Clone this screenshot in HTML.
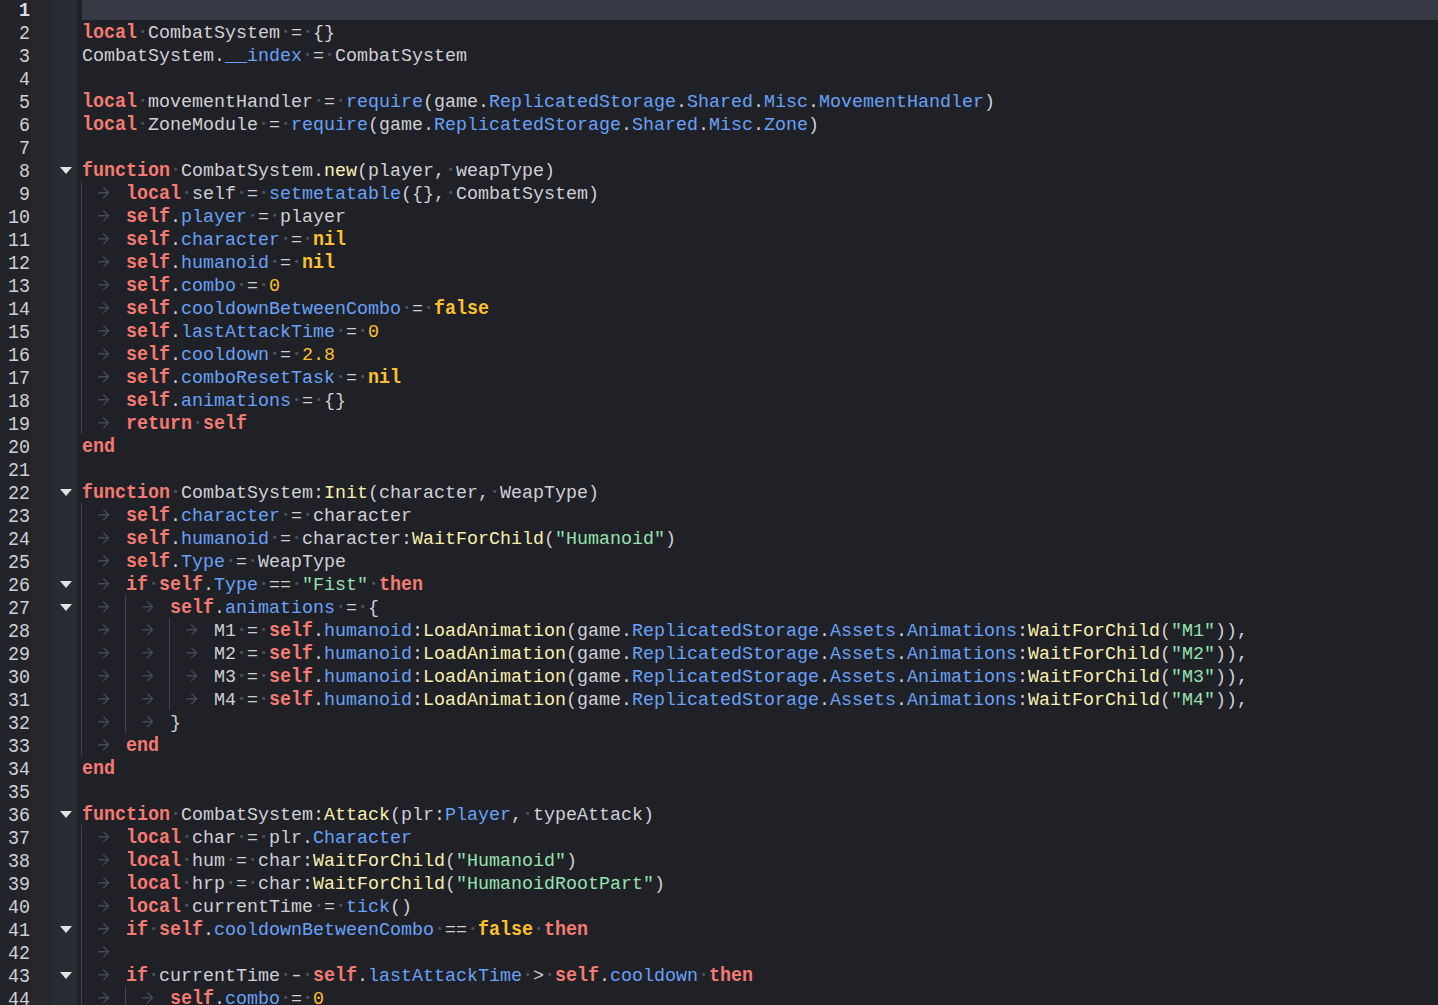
<!DOCTYPE html>
<html><head><meta charset="utf-8"><style>
*{margin:0;padding:0;box-sizing:border-box}
html,body{width:1438px;height:1005px;overflow:hidden;background:#202126}
body{position:relative;font-family:"Liberation Mono",monospace;font-size:18.33px;line-height:23px}
.g1{position:absolute;left:0;top:0;width:31px;height:1005px;background:#222429}
.g2{position:absolute;left:31px;top:0;width:22.5px;height:1005px;background:#26282e}
.g3{position:absolute;left:53.5px;top:0;width:23.5px;height:1005px;background:#292b32}
.curl{position:absolute;left:82px;top:-3px;right:0;height:23px;background:#373a44}
.ln{position:absolute;left:0;width:30px;text-align:right;color:#d0d0d4;height:23px;transform-origin:0 16px;transform:scaleY(1.08)}
.ln.cur{color:#dddde6;font-weight:bold}
.cl{position:absolute;left:82px;white-space:pre;height:23px;color:#d0d0d6;transform-origin:0 16px;transform:scaleY(1.03)}
.kw{color:#f47b72;font-weight:bold;display:inline-block;transform-origin:0 16px;transform:scaleY(1.05)}
.bool{color:#fcc02e;font-weight:bold;display:inline-block;transform-origin:0 16px;transform:scaleY(1.05)}
.num{color:#fcc02e}
.str{color:#95e3b0}
.fn{color:#f9f0b0}
.mem{color:#68a2f8}
.blt{color:#68a2f8}
.id,.op{color:#d0d0d6}
.dash{display:inline-block;transform:scaleX(1.4)}
.fold{position:absolute;left:59.5px;width:0;height:0;border-left:6px solid transparent;border-right:6px solid transparent;border-top:7px solid #e2e2e2}
.gd{position:absolute;width:1px;background:#42454e}
svg{position:absolute;left:0;top:0}
</style></head><body>
<div class="g1"></div><div class="g2"></div><div class="g3"></div>
<div class="curl"></div>
<div class="gd" style="left:81px;top:181px;height:253px"></div>
<div class="gd" style="left:81px;top:503px;height:253px"></div>
<div class="gd" style="left:125px;top:595px;height:138px"></div>
<div class="gd" style="left:169px;top:618px;height:92px"></div>
<div class="gd" style="left:81px;top:825px;height:184px"></div>
<div class="gd" style="left:125px;top:986px;height:23px"></div>
<svg width="1438" height="1005"><g fill="#4d505b"><circle cx="142.7" cy="31.4" r="1.60"/><circle cx="285.7" cy="31.4" r="1.60"/><circle cx="307.7" cy="31.4" r="1.60"/><circle cx="307.7" cy="54.4" r="1.60"/><circle cx="329.7" cy="54.4" r="1.60"/><circle cx="142.7" cy="100.3" r="1.60"/><circle cx="318.7" cy="100.3" r="1.60"/><circle cx="340.7" cy="100.3" r="1.60"/><circle cx="142.7" cy="123.3" r="1.60"/><circle cx="263.7" cy="123.3" r="1.60"/><circle cx="285.7" cy="123.3" r="1.60"/><circle cx="175.7" cy="169.3" r="1.60"/><circle cx="450.7" cy="169.3" r="1.60"/><circle cx="186.7" cy="192.3" r="1.60"/><circle cx="241.7" cy="192.3" r="1.60"/><circle cx="263.7" cy="192.3" r="1.60"/><circle cx="450.7" cy="192.3" r="1.60"/><circle cx="252.7" cy="215.3" r="1.60"/><circle cx="274.7" cy="215.3" r="1.60"/><circle cx="285.7" cy="238.3" r="1.60"/><circle cx="307.7" cy="238.3" r="1.60"/><circle cx="274.7" cy="261.4" r="1.60"/><circle cx="296.7" cy="261.4" r="1.60"/><circle cx="241.7" cy="284.4" r="1.60"/><circle cx="263.7" cy="284.4" r="1.60"/><circle cx="406.7" cy="307.4" r="1.60"/><circle cx="428.7" cy="307.4" r="1.60"/><circle cx="340.7" cy="330.4" r="1.60"/><circle cx="362.7" cy="330.4" r="1.60"/><circle cx="274.7" cy="353.4" r="1.60"/><circle cx="296.7" cy="353.4" r="1.60"/><circle cx="340.7" cy="376.4" r="1.60"/><circle cx="362.7" cy="376.4" r="1.60"/><circle cx="296.7" cy="399.4" r="1.60"/><circle cx="318.7" cy="399.4" r="1.60"/><circle cx="197.7" cy="422.4" r="1.60"/><circle cx="175.7" cy="491.4" r="1.60"/><circle cx="494.7" cy="491.4" r="1.60"/><circle cx="285.7" cy="514.4" r="1.60"/><circle cx="307.7" cy="514.4" r="1.60"/><circle cx="274.7" cy="537.4" r="1.60"/><circle cx="296.7" cy="537.4" r="1.60"/><circle cx="230.7" cy="560.4" r="1.60"/><circle cx="252.7" cy="560.4" r="1.60"/><circle cx="153.7" cy="583.4" r="1.60"/><circle cx="263.7" cy="583.4" r="1.60"/><circle cx="296.7" cy="583.4" r="1.60"/><circle cx="373.7" cy="583.4" r="1.60"/><circle cx="340.7" cy="606.4" r="1.60"/><circle cx="362.7" cy="606.4" r="1.60"/><circle cx="241.7" cy="629.4" r="1.60"/><circle cx="263.7" cy="629.4" r="1.60"/><circle cx="241.7" cy="652.4" r="1.60"/><circle cx="263.7" cy="652.4" r="1.60"/><circle cx="241.7" cy="675.4" r="1.60"/><circle cx="263.7" cy="675.4" r="1.60"/><circle cx="241.7" cy="698.4" r="1.60"/><circle cx="263.7" cy="698.4" r="1.60"/><circle cx="175.7" cy="813.4" r="1.60"/><circle cx="527.7" cy="813.4" r="1.60"/><circle cx="186.7" cy="836.4" r="1.60"/><circle cx="241.7" cy="836.4" r="1.60"/><circle cx="263.7" cy="836.4" r="1.60"/><circle cx="186.7" cy="859.4" r="1.60"/><circle cx="230.7" cy="859.4" r="1.60"/><circle cx="252.7" cy="859.4" r="1.60"/><circle cx="186.7" cy="882.4" r="1.60"/><circle cx="230.7" cy="882.4" r="1.60"/><circle cx="252.7" cy="882.4" r="1.60"/><circle cx="186.7" cy="905.4" r="1.60"/><circle cx="318.7" cy="905.4" r="1.60"/><circle cx="340.7" cy="905.4" r="1.60"/><circle cx="153.7" cy="928.4" r="1.60"/><circle cx="439.7" cy="928.4" r="1.60"/><circle cx="472.7" cy="928.4" r="1.60"/><circle cx="538.7" cy="928.4" r="1.60"/><circle cx="153.7" cy="974.4" r="1.60"/><circle cx="285.7" cy="974.4" r="1.60"/><circle cx="307.7" cy="974.4" r="1.60"/><circle cx="527.7" cy="974.4" r="1.60"/><circle cx="549.7" cy="974.4" r="1.60"/><circle cx="703.7" cy="974.4" r="1.60"/><circle cx="285.7" cy="997.4" r="1.60"/><circle cx="307.7" cy="997.4" r="1.60"/></g><g fill="none" stroke="#454955" stroke-width="1.4" stroke-linecap="butt" stroke-linejoin="round"><path d="M98.2 192.8H108.6M103.3 187.5L108.6 192.8L103.3 198.1"/><path d="M98.2 215.8H108.6M103.3 210.5L108.6 215.8L103.3 221.1"/><path d="M98.2 238.8H108.6M103.3 233.5L108.6 238.8L103.3 244.1"/><path d="M98.2 261.8H108.6M103.3 256.5L108.6 261.8L103.3 267.1"/><path d="M98.2 284.8H108.6M103.3 279.5L108.6 284.8L103.3 290.1"/><path d="M98.2 307.8H108.6M103.3 302.5L108.6 307.8L103.3 313.1"/><path d="M98.2 330.8H108.6M103.3 325.5L108.6 330.8L103.3 336.1"/><path d="M98.2 353.8H108.6M103.3 348.5L108.6 353.8L103.3 359.1"/><path d="M98.2 376.8H108.6M103.3 371.5L108.6 376.8L103.3 382.1"/><path d="M98.2 399.8H108.6M103.3 394.5L108.6 399.8L103.3 405.1"/><path d="M98.2 422.8H108.6M103.3 417.5L108.6 422.8L103.3 428.1"/><path d="M98.2 514.8H108.6M103.3 509.5L108.6 514.8L103.3 520.1"/><path d="M98.2 537.8H108.6M103.3 532.5L108.6 537.8L103.3 543.1"/><path d="M98.2 560.8H108.6M103.3 555.5L108.6 560.8L103.3 566.1"/><path d="M98.2 583.8H108.6M103.3 578.5L108.6 583.8L103.3 589.1"/><path d="M98.2 606.8H108.6M103.3 601.5L108.6 606.8L103.3 612.1"/><path d="M142.2 606.8H152.6M147.3 601.5L152.6 606.8L147.3 612.1"/><path d="M98.2 629.8H108.6M103.3 624.5L108.6 629.8L103.3 635.1"/><path d="M142.2 629.8H152.6M147.3 624.5L152.6 629.8L147.3 635.1"/><path d="M186.2 629.8H196.6M191.3 624.5L196.6 629.8L191.3 635.1"/><path d="M98.2 652.8H108.6M103.3 647.5L108.6 652.8L103.3 658.1"/><path d="M142.2 652.8H152.6M147.3 647.5L152.6 652.8L147.3 658.1"/><path d="M186.2 652.8H196.6M191.3 647.5L196.6 652.8L191.3 658.1"/><path d="M98.2 675.8H108.6M103.3 670.5L108.6 675.8L103.3 681.1"/><path d="M142.2 675.8H152.6M147.3 670.5L152.6 675.8L147.3 681.1"/><path d="M186.2 675.8H196.6M191.3 670.5L196.6 675.8L191.3 681.1"/><path d="M98.2 698.8H108.6M103.3 693.5L108.6 698.8L103.3 704.1"/><path d="M142.2 698.8H152.6M147.3 693.5L152.6 698.8L147.3 704.1"/><path d="M186.2 698.8H196.6M191.3 693.5L196.6 698.8L191.3 704.1"/><path d="M98.2 721.8H108.6M103.3 716.5L108.6 721.8L103.3 727.1"/><path d="M142.2 721.8H152.6M147.3 716.5L152.6 721.8L147.3 727.1"/><path d="M98.2 744.8H108.6M103.3 739.5L108.6 744.8L103.3 750.1"/><path d="M98.2 836.8H108.6M103.3 831.5L108.6 836.8L103.3 842.1"/><path d="M98.2 859.8H108.6M103.3 854.5L108.6 859.8L103.3 865.1"/><path d="M98.2 882.8H108.6M103.3 877.5L108.6 882.8L103.3 888.1"/><path d="M98.2 905.8H108.6M103.3 900.5L108.6 905.8L103.3 911.1"/><path d="M98.2 928.8H108.6M103.3 923.5L108.6 928.8L103.3 934.1"/><path d="M98.2 951.8H108.6M103.3 946.5L108.6 951.8L103.3 957.1"/><path d="M98.2 974.8H108.6M103.3 969.5L108.6 974.8L103.3 980.1"/><path d="M98.2 997.8H108.6M103.3 992.5L108.6 997.8L103.3 1003.1"/><path d="M142.2 997.8H152.6M147.3 992.5L152.6 997.8L147.3 1003.1"/></g></svg>
<div class="ln cur" style="top:-0.5px">1</div>
<div class="cl" style="top:-1.0px"></div>
<div class="ln" style="top:22.5px">2</div>
<div class="cl" style="top:22.0px"><span class="kw">local</span> <span class="id">CombatSystem</span> <span class="op">=</span> <span class="op">{</span><span class="op">}</span></div>
<div class="ln" style="top:45.5px">3</div>
<div class="cl" style="top:45.0px"><span class="id">CombatSystem</span><span class="op">.</span><span class="mem">__index</span> <span class="op">=</span> <span class="id">CombatSystem</span></div>
<div class="ln" style="top:68.5px">4</div>
<div class="cl" style="top:68.0px"></div>
<div class="ln" style="top:91.5px">5</div>
<div class="cl" style="top:91.0px"><span class="kw">local</span> <span class="id">movementHandler</span> <span class="op">=</span> <span class="blt">require</span><span class="op">(</span><span class="id">game</span><span class="op">.</span><span class="mem">ReplicatedStorage</span><span class="op">.</span><span class="mem">Shared</span><span class="op">.</span><span class="mem">Misc</span><span class="op">.</span><span class="mem">MovementHandler</span><span class="op">)</span></div>
<div class="ln" style="top:114.5px">6</div>
<div class="cl" style="top:114.0px"><span class="kw">local</span> <span class="id">ZoneModule</span> <span class="op">=</span> <span class="blt">require</span><span class="op">(</span><span class="id">game</span><span class="op">.</span><span class="mem">ReplicatedStorage</span><span class="op">.</span><span class="mem">Shared</span><span class="op">.</span><span class="mem">Misc</span><span class="op">.</span><span class="mem">Zone</span><span class="op">)</span></div>
<div class="ln" style="top:137.5px">7</div>
<div class="cl" style="top:137.0px"></div>
<div class="ln" style="top:160.5px">8</div>
<div class="fold" style="top:166.5px"></div>
<div class="cl" style="top:160.0px"><span class="kw">function</span> <span class="id">CombatSystem</span><span class="op">.</span><span class="fn">new</span><span class="op">(</span><span class="id">player</span><span class="op">,</span> <span class="id">weapType</span><span class="op">)</span></div>
<div class="ln" style="top:183.5px">9</div>
<div class="cl" style="top:183.0px">    <span class="kw">local</span> <span class="id">self</span> <span class="op">=</span> <span class="blt">setmetatable</span><span class="op">(</span><span class="op">{</span><span class="op">}</span><span class="op">,</span> <span class="id">CombatSystem</span><span class="op">)</span></div>
<div class="ln" style="top:206.5px">10</div>
<div class="cl" style="top:206.0px">    <span class="kw">self</span><span class="op">.</span><span class="mem">player</span> <span class="op">=</span> <span class="id">player</span></div>
<div class="ln" style="top:229.5px">11</div>
<div class="cl" style="top:229.0px">    <span class="kw">self</span><span class="op">.</span><span class="mem">character</span> <span class="op">=</span> <span class="bool">nil</span></div>
<div class="ln" style="top:252.5px">12</div>
<div class="cl" style="top:252.0px">    <span class="kw">self</span><span class="op">.</span><span class="mem">humanoid</span> <span class="op">=</span> <span class="bool">nil</span></div>
<div class="ln" style="top:275.5px">13</div>
<div class="cl" style="top:275.0px">    <span class="kw">self</span><span class="op">.</span><span class="mem">combo</span> <span class="op">=</span> <span class="num">0</span></div>
<div class="ln" style="top:298.5px">14</div>
<div class="cl" style="top:298.0px">    <span class="kw">self</span><span class="op">.</span><span class="mem">cooldownBetweenCombo</span> <span class="op">=</span> <span class="bool">false</span></div>
<div class="ln" style="top:321.5px">15</div>
<div class="cl" style="top:321.0px">    <span class="kw">self</span><span class="op">.</span><span class="mem">lastAttackTime</span> <span class="op">=</span> <span class="num">0</span></div>
<div class="ln" style="top:344.5px">16</div>
<div class="cl" style="top:344.0px">    <span class="kw">self</span><span class="op">.</span><span class="mem">cooldown</span> <span class="op">=</span> <span class="num">2.8</span></div>
<div class="ln" style="top:367.5px">17</div>
<div class="cl" style="top:367.0px">    <span class="kw">self</span><span class="op">.</span><span class="mem">comboResetTask</span> <span class="op">=</span> <span class="bool">nil</span></div>
<div class="ln" style="top:390.5px">18</div>
<div class="cl" style="top:390.0px">    <span class="kw">self</span><span class="op">.</span><span class="mem">animations</span> <span class="op">=</span> <span class="op">{</span><span class="op">}</span></div>
<div class="ln" style="top:413.5px">19</div>
<div class="cl" style="top:413.0px">    <span class="kw">return</span> <span class="kw">self</span></div>
<div class="ln" style="top:436.5px">20</div>
<div class="cl" style="top:436.0px"><span class="kw">end</span></div>
<div class="ln" style="top:459.5px">21</div>
<div class="cl" style="top:459.0px"></div>
<div class="ln" style="top:482.5px">22</div>
<div class="fold" style="top:488.5px"></div>
<div class="cl" style="top:482.0px"><span class="kw">function</span> <span class="id">CombatSystem</span><span class="op">:</span><span class="fn">Init</span><span class="op">(</span><span class="id">character</span><span class="op">,</span> <span class="id">WeapType</span><span class="op">)</span></div>
<div class="ln" style="top:505.5px">23</div>
<div class="cl" style="top:505.0px">    <span class="kw">self</span><span class="op">.</span><span class="mem">character</span> <span class="op">=</span> <span class="id">character</span></div>
<div class="ln" style="top:528.5px">24</div>
<div class="cl" style="top:528.0px">    <span class="kw">self</span><span class="op">.</span><span class="mem">humanoid</span> <span class="op">=</span> <span class="id">character</span><span class="op">:</span><span class="fn">WaitForChild</span><span class="op">(</span><span class="str">"Humanoid"</span><span class="op">)</span></div>
<div class="ln" style="top:551.5px">25</div>
<div class="cl" style="top:551.0px">    <span class="kw">self</span><span class="op">.</span><span class="mem">Type</span> <span class="op">=</span> <span class="id">WeapType</span></div>
<div class="ln" style="top:574.5px">26</div>
<div class="fold" style="top:580.5px"></div>
<div class="cl" style="top:574.0px">    <span class="kw">if</span> <span class="kw">self</span><span class="op">.</span><span class="mem">Type</span> <span class="op">=</span><span class="op">=</span> <span class="str">"Fist"</span> <span class="kw">then</span></div>
<div class="ln" style="top:597.5px">27</div>
<div class="fold" style="top:603.5px"></div>
<div class="cl" style="top:597.0px">        <span class="kw">self</span><span class="op">.</span><span class="mem">animations</span> <span class="op">=</span> <span class="op">{</span></div>
<div class="ln" style="top:620.5px">28</div>
<div class="cl" style="top:620.0px">            <span class="id">M1</span> <span class="op">=</span> <span class="kw">self</span><span class="op">.</span><span class="mem">humanoid</span><span class="op">:</span><span class="fn">LoadAnimation</span><span class="op">(</span><span class="id">game</span><span class="op">.</span><span class="mem">ReplicatedStorage</span><span class="op">.</span><span class="mem">Assets</span><span class="op">.</span><span class="mem">Animations</span><span class="op">:</span><span class="fn">WaitForChild</span><span class="op">(</span><span class="str">"M1"</span><span class="op">)</span><span class="op">)</span><span class="op">,</span></div>
<div class="ln" style="top:643.5px">29</div>
<div class="cl" style="top:643.0px">            <span class="id">M2</span> <span class="op">=</span> <span class="kw">self</span><span class="op">.</span><span class="mem">humanoid</span><span class="op">:</span><span class="fn">LoadAnimation</span><span class="op">(</span><span class="id">game</span><span class="op">.</span><span class="mem">ReplicatedStorage</span><span class="op">.</span><span class="mem">Assets</span><span class="op">.</span><span class="mem">Animations</span><span class="op">:</span><span class="fn">WaitForChild</span><span class="op">(</span><span class="str">"M2"</span><span class="op">)</span><span class="op">)</span><span class="op">,</span></div>
<div class="ln" style="top:666.5px">30</div>
<div class="cl" style="top:666.0px">            <span class="id">M3</span> <span class="op">=</span> <span class="kw">self</span><span class="op">.</span><span class="mem">humanoid</span><span class="op">:</span><span class="fn">LoadAnimation</span><span class="op">(</span><span class="id">game</span><span class="op">.</span><span class="mem">ReplicatedStorage</span><span class="op">.</span><span class="mem">Assets</span><span class="op">.</span><span class="mem">Animations</span><span class="op">:</span><span class="fn">WaitForChild</span><span class="op">(</span><span class="str">"M3"</span><span class="op">)</span><span class="op">)</span><span class="op">,</span></div>
<div class="ln" style="top:689.5px">31</div>
<div class="cl" style="top:689.0px">            <span class="id">M4</span> <span class="op">=</span> <span class="kw">self</span><span class="op">.</span><span class="mem">humanoid</span><span class="op">:</span><span class="fn">LoadAnimation</span><span class="op">(</span><span class="id">game</span><span class="op">.</span><span class="mem">ReplicatedStorage</span><span class="op">.</span><span class="mem">Assets</span><span class="op">.</span><span class="mem">Animations</span><span class="op">:</span><span class="fn">WaitForChild</span><span class="op">(</span><span class="str">"M4"</span><span class="op">)</span><span class="op">)</span><span class="op">,</span></div>
<div class="ln" style="top:712.5px">32</div>
<div class="cl" style="top:712.0px">        <span class="op">}</span></div>
<div class="ln" style="top:735.5px">33</div>
<div class="cl" style="top:735.0px">    <span class="kw">end</span></div>
<div class="ln" style="top:758.5px">34</div>
<div class="cl" style="top:758.0px"><span class="kw">end</span></div>
<div class="ln" style="top:781.5px">35</div>
<div class="cl" style="top:781.0px"></div>
<div class="ln" style="top:804.5px">36</div>
<div class="fold" style="top:810.5px"></div>
<div class="cl" style="top:804.0px"><span class="kw">function</span> <span class="id">CombatSystem</span><span class="op">:</span><span class="fn">Attack</span><span class="op">(</span><span class="id">plr</span><span class="op">:</span><span class="mem">Player</span><span class="op">,</span> <span class="id">typeAttack</span><span class="op">)</span></div>
<div class="ln" style="top:827.5px">37</div>
<div class="cl" style="top:827.0px">    <span class="kw">local</span> <span class="id">char</span> <span class="op">=</span> <span class="id">plr</span><span class="op">.</span><span class="mem">Character</span></div>
<div class="ln" style="top:850.5px">38</div>
<div class="cl" style="top:850.0px">    <span class="kw">local</span> <span class="id">hum</span> <span class="op">=</span> <span class="id">char</span><span class="op">:</span><span class="fn">WaitForChild</span><span class="op">(</span><span class="str">"Humanoid"</span><span class="op">)</span></div>
<div class="ln" style="top:873.5px">39</div>
<div class="cl" style="top:873.0px">    <span class="kw">local</span> <span class="id">hrp</span> <span class="op">=</span> <span class="id">char</span><span class="op">:</span><span class="fn">WaitForChild</span><span class="op">(</span><span class="str">"HumanoidRootPart"</span><span class="op">)</span></div>
<div class="ln" style="top:896.5px">40</div>
<div class="cl" style="top:896.0px">    <span class="kw">local</span> <span class="id">currentTime</span> <span class="op">=</span> <span class="blt">tick</span><span class="op">(</span><span class="op">)</span></div>
<div class="ln" style="top:919.5px">41</div>
<div class="fold" style="top:925.5px"></div>
<div class="cl" style="top:919.0px">    <span class="kw">if</span> <span class="kw">self</span><span class="op">.</span><span class="mem">cooldownBetweenCombo</span> <span class="op">=</span><span class="op">=</span> <span class="bool">false</span> <span class="kw">then</span></div>
<div class="ln" style="top:942.5px">42</div>
<div class="cl" style="top:942.0px">    </div>
<div class="ln" style="top:965.5px">43</div>
<div class="fold" style="top:971.5px"></div>
<div class="cl" style="top:965.0px">    <span class="kw">if</span> <span class="id">currentTime</span> <span class="dash">-</span> <span class="kw">self</span><span class="op">.</span><span class="mem">lastAttackTime</span> <span class="op">&gt;</span> <span class="kw">self</span><span class="op">.</span><span class="mem">cooldown</span> <span class="kw">then</span></div>
<div class="ln" style="top:988.5px">44</div>
<div class="cl" style="top:988.0px">        <span class="kw">self</span><span class="op">.</span><span class="mem">combo</span> <span class="op">=</span> <span class="num">0</span></div>
</body></html>
